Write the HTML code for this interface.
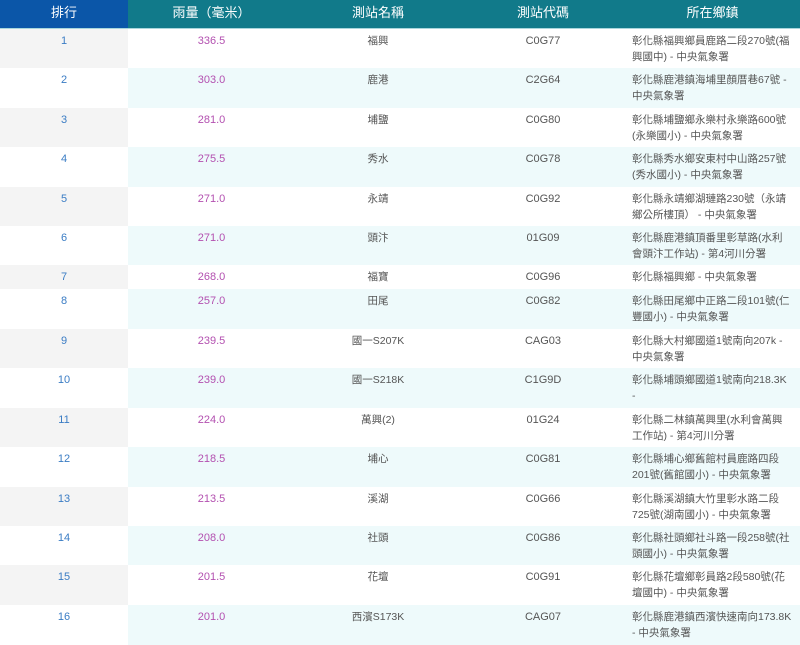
<!DOCTYPE html>
<html><head><meta charset="utf-8"><style>
body{margin:0;width:800px;height:640px;overflow:hidden;background:#fff;font-family:"Liberation Sans","Noto Sans CJK TC",sans-serif;}
.hd{display:flex;height:28px;border-bottom:1px solid #a9d6dc;color:#fff;font-size:13px;line-height:25px;}
.hd div{text-align:center;background:#117a8a;}
.hd div:first-child{background:#0b56a8;}
.row{display:flex;font-size:10.5px;line-height:16px;color:#555;}
.row>div{padding-top:4px;box-sizing:border-box;white-space:nowrap;}
.r .a{width:128px;text-align:center;color:#3a7cc4;font-size:11px;}
.r .b{width:167px;text-align:center;color:#b350b0;font-size:11px;}
.r .c{width:166px;text-align:center;}
.r .d{width:164px;text-align:center;font-size:11px;}
.r .e{width:175px;padding-left:7px;}
.o .a{background:#f4f4f4;}
.e2 .b,.e2 .c,.e2 .d,.e2 .e{background:#eefafb;}
</style></head><body>
<div class="hd"><div style="width:128px">排行</div><div style="width:167px">雨量（毫米）</div><div style="width:166px">測站名稱</div><div style="width:164px">測站代碼</div><div style="width:175px">所在鄉鎮</div></div>
<div class="row r o" style="height:39px"><div class="a">1</div><div class="b">336.5</div><div class="c">福興</div><div class="d">C0G77</div><div class="e">彰化縣福興鄉員鹿路二段270號(福<br>興國中) - 中央氣象署</div></div>
<div class="row r e2" style="height:40px"><div class="a">2</div><div class="b">303.0</div><div class="c">鹿港</div><div class="d">C2G64</div><div class="e">彰化縣鹿港鎮海埔里顏厝巷67號 -<br>中央氣象署</div></div>
<div class="row r o" style="height:39px"><div class="a">3</div><div class="b">281.0</div><div class="c">埔鹽</div><div class="d">C0G80</div><div class="e">彰化縣埔鹽鄉永樂村永樂路600號<br>(永樂國小) - 中央氣象署</div></div>
<div class="row r e2" style="height:40px"><div class="a">4</div><div class="b">275.5</div><div class="c">秀水</div><div class="d">C0G78</div><div class="e">彰化縣秀水鄉安東村中山路257號<br>(秀水國小) - 中央氣象署</div></div>
<div class="row r o" style="height:39px"><div class="a">5</div><div class="b">271.0</div><div class="c">永靖</div><div class="d">C0G92</div><div class="e">彰化縣永靖鄉湖璉路230號（永靖<br>鄉公所樓頂） - 中央氣象署</div></div>
<div class="row r e2" style="height:39px"><div class="a">6</div><div class="b">271.0</div><div class="c">頭汴</div><div class="d">01G09</div><div class="e">彰化縣鹿港鎮頂番里彰草路(水利<br>會頭汴工作站) - 第4河川分署</div></div>
<div class="row r o" style="height:24px"><div class="a">7</div><div class="b">268.0</div><div class="c">福寶</div><div class="d">C0G96</div><div class="e">彰化縣福興鄉 - 中央氣象署</div></div>
<div class="row r e2" style="height:40px"><div class="a">8</div><div class="b">257.0</div><div class="c">田尾</div><div class="d">C0G82</div><div class="e">彰化縣田尾鄉中正路二段101號(仁<br>豐國小) - 中央氣象署</div></div>
<div class="row r o" style="height:39px"><div class="a">9</div><div class="b">239.5</div><div class="c">國一S207K</div><div class="d">CAG03</div><div class="e">彰化縣大村鄉國道1號南向207k -<br>中央氣象署</div></div>
<div class="row r e2" style="height:40px"><div class="a">10</div><div class="b">239.0</div><div class="c">國一S218K</div><div class="d">C1G9D</div><div class="e">彰化縣埔頭鄉國道1號南向218.3K<br>-</div></div>
<div class="row r o" style="height:39px"><div class="a">11</div><div class="b">224.0</div><div class="c">萬興(2)</div><div class="d">01G24</div><div class="e">彰化縣二林鎮萬興里(水利會萬興<br>工作站) - 第4河川分署</div></div>
<div class="row r e2" style="height:40px"><div class="a">12</div><div class="b">218.5</div><div class="c">埔心</div><div class="d">C0G81</div><div class="e">彰化縣埔心鄉舊館村員鹿路四段<br>201號(舊館國小) - 中央氣象署</div></div>
<div class="row r o" style="height:39px"><div class="a">13</div><div class="b">213.5</div><div class="c">溪湖</div><div class="d">C0G66</div><div class="e">彰化縣溪湖鎮大竹里彰水路二段<br>725號(湖南國小) - 中央氣象署</div></div>
<div class="row r e2" style="height:39px"><div class="a">14</div><div class="b">208.0</div><div class="c">社頭</div><div class="d">C0G86</div><div class="e">彰化縣社頭鄉社斗路一段258號(社<br>頭國小) - 中央氣象署</div></div>
<div class="row r o" style="height:40px"><div class="a">15</div><div class="b">201.5</div><div class="c">花壇</div><div class="d">C0G91</div><div class="e">彰化縣花壇鄉彰員路2段580號(花<br>壇國中) - 中央氣象署</div></div>
<div class="row r e2" style="height:40px"><div class="a">16</div><div class="b">201.0</div><div class="c">西濱S173K</div><div class="d">CAG07</div><div class="e">彰化縣鹿港鎮西濱快速南向173.8K<br>- 中央氣象署</div></div>
</body></html>
